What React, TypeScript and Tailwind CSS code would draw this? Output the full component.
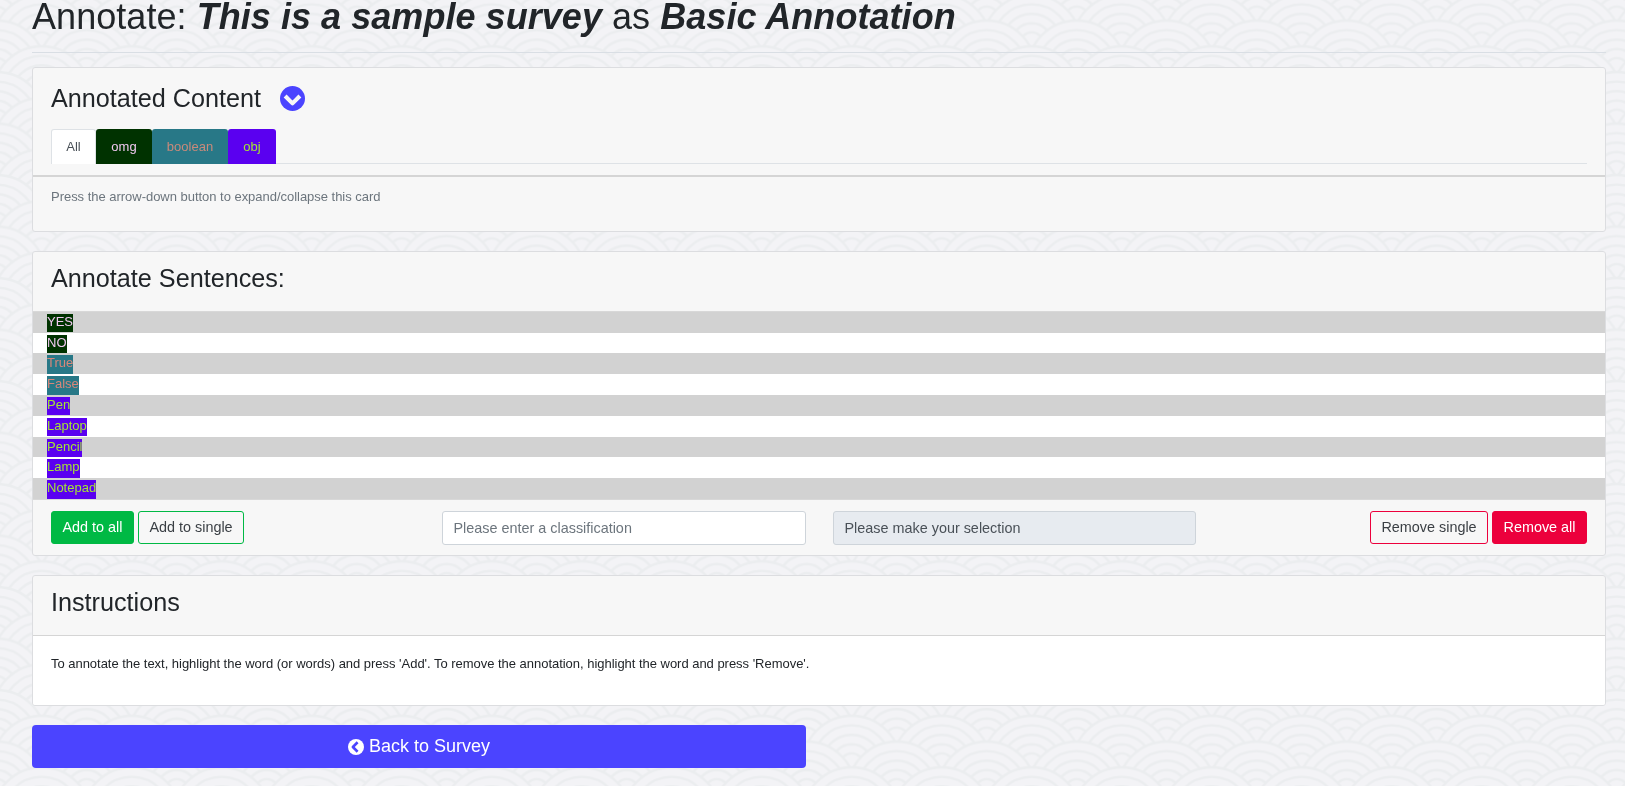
import React from "react";

const RADII = [49, 39.5, 30, 20.5, 11.5];
const ROWS = [-4, -3, -2, -1, 0, 1, 2];

/** Overlapping wave scales, painted top row first so that lower rows cover upper ones. */
function WaveBackdrop() {
  return (
    <svg className="fixed inset-0 -z-10 h-full w-full" aria-hidden="true">
      <defs>
        <pattern id="waves" width="90" height="51.5" patternUnits="userSpaceOnUse" x="41.7" y="-5.2">
          <rect width="90" height="51.5" fill="#f3f3f6" />
          {ROWS.map((row) =>
            (row % 2 === 0 ? [0, 90] : [-45, 45, 135]).map((cx) =>
              RADII.map((r) => (
                <circle
                  key={`${row}-${cx}-${r}`}
                  cx={cx}
                  cy={row * 25.75 + 49}
                  r={r}
                  fill="#f3f3f6"
                  stroke="#ebedef"
                  strokeWidth="2.4"
                />
              )),
            ),
          )}
        </pattern>
      </defs>
      <rect width="100%" height="100%" fill="url(#waves)" />
    </svg>
  );
}

function ChevronCircle({ className, stroke }: { className: string; stroke: string }) {
  return (
    <svg viewBox="0 0 24 24" className={className} aria-hidden="true">
      <circle cx="12" cy="12" r="12" fill="currentColor" />
      <path d="M4.9 9.6 L12 16.7 L19.1 9.6" fill="none" stroke={stroke} strokeWidth="3.9" strokeLinejoin="round" />
    </svg>
  );
}

const tabs = [
  { label: "omg", style: "w-14 bg-[#003200] text-[#f0c8f0]" },
  { label: "boolean", style: "w-[76px] bg-[#287887] text-[#c98a7b]" },
  { label: "obj", style: "w-12 bg-[#5a00f0] text-[#a5e632]" },
];

const omg = "bg-[#003200] text-[#f0c8f0]";
const bool = "bg-[#287887] text-[#d7877a]";
const obj = "bg-[#5a00f0] text-[#a5e632]";

const sentences = [
  { text: "YES", style: omg },
  { text: "NO", style: omg },
  { text: "True", style: bool },
  { text: "False", style: bool },
  { text: "Pen", style: obj },
  { text: "Laptop", style: obj },
  { text: "Pencil", style: obj },
  { text: "Lamp", style: obj },
  { text: "Notepad", style: obj },
];

const card = "mb-[19px] overflow-hidden rounded-[3px] border border-[#dcdde0] bg-[#f7f7f7]";
const button = "h-[33px] rounded-[3px] border text-[14.4px] leading-[30px]";
const field = "h-[34px] rounded-[3px] border border-[#ced4da] px-[10.5px] text-[14.4px]";

export default function App() {
  return (
    <div className="pl-8 pr-[19px] font-['Liberation_Sans',Arial,sans-serif] text-[13px] leading-[1.6] text-[#212529]">
      <WaveBackdrop />
      <h1 className="h-[52px] text-[36px] leading-[33px] tracking-[0.05px]">
        Annotate: <b><i>This is a sample survey</i></b> as <b><i>Basic Annotation</i></b>
      </h1>
      <hr className="mb-[14px] border-[#d9dee4]" />

      <section className={`${card} h-[165px]`}>
        <div className="h-[109px] border-b-2 border-[#d5d5d5] px-[18px] pt-[14px]">
          <h2 className="flex h-[47px] items-start text-[25.2px] leading-[32px]">
            Annotated Content
            <ChevronCircle className="ml-[19px] mt-[4px] size-[25px] text-[#4b44ff]" stroke="#f7f7f7" />
          </h2>
          <div className="flex h-[35px] border-b border-[#dee2e6]">
            <span className="h-[35px] w-[45px] rounded-t-[3px] border border-b-0 border-[#dee2e6] bg-white text-center leading-[34px] text-[#495057]">
              All
            </span>
            {tabs.map((tab) => (
              <span key={tab.label} className={`h-[35px] rounded-t-[3px] text-center leading-[35px] ${tab.style}`}>
                {tab.label}
              </span>
            ))}
          </div>
        </div>
        <p className="px-[18px] pt-[9.5px] tracking-[-0.027px] text-[#6c757d]">
          Press the arrow-down button to expand/collapse this card
        </p>
      </section>

      <section className={`${card} h-[305px]`}>
        <h2 className="h-[59.8px] border-b border-[#d8d8d8] px-[18px] pt-[10px] text-[25.2px] leading-[32px]">
          Annotate Sentences:
        </h2>
        <ul>
          {sentences.map((s) => (
            <li key={s.text} className="h-[20.8px] pl-[14px] leading-[19.6px] odd:bg-[#d2d2d2] even:bg-white">
              <span className={`pb-[3.5px] ${s.style}`}>{s.text}</span>
            </li>
          ))}
        </ul>
        <div className="flex border-t border-[#d8d8d8] px-[18px] pt-[11px]">
          <button className={`${button} w-[83px] border-[#00b944] bg-[#00b944] text-white`}>Add to all</button>
          <button className={`${button} ml-1 w-[106px] border-[#00b944] text-[#3a3f44]`}>Add to single</button>
          <input
            className={`${field} ml-[198px] w-[364px] bg-white placeholder:text-[#6c757d]`}
            placeholder="Please enter a classification"
          />
          <input
            className={`${field} ml-[27px] w-[363px] bg-[#e7ebf0] text-[#495057]`}
            value="Please make your selection"
            readOnly
          />
          <button className={`${button} ml-auto w-[118px] border-[#ec003c] text-[#3a3f44]`}>Remove single</button>
          <button className={`${button} ml-1 w-[95px] border-[#ec003c] bg-[#ec003c] text-white`}>Remove all</button>
        </div>
      </section>

      <section className={`${card} h-[131px]`}>
        <h2 className="h-[60px] border-b border-[#d5d5d5] px-[18px] pt-[10px] text-[25.2px] leading-[32px]">
          Instructions
        </h2>
        <p className="h-full bg-white px-[18px] pt-[17.5px] tracking-[-0.027px]">
          To annotate the text, highlight the word (or words) and press 'Add'. To remove the annotation, highlight the
          word and press 'Remove'.
        </p>
      </section>

      <button className="flex h-[43px] w-[774px] items-center justify-center rounded-[4px] bg-[#4b44ff] text-[18px] text-white">
        <ChevronCircle className="mr-[5px] size-4 rotate-90" stroke="#4b44ff" />
        Back to Survey
      </button>
    </div>
  );
}
